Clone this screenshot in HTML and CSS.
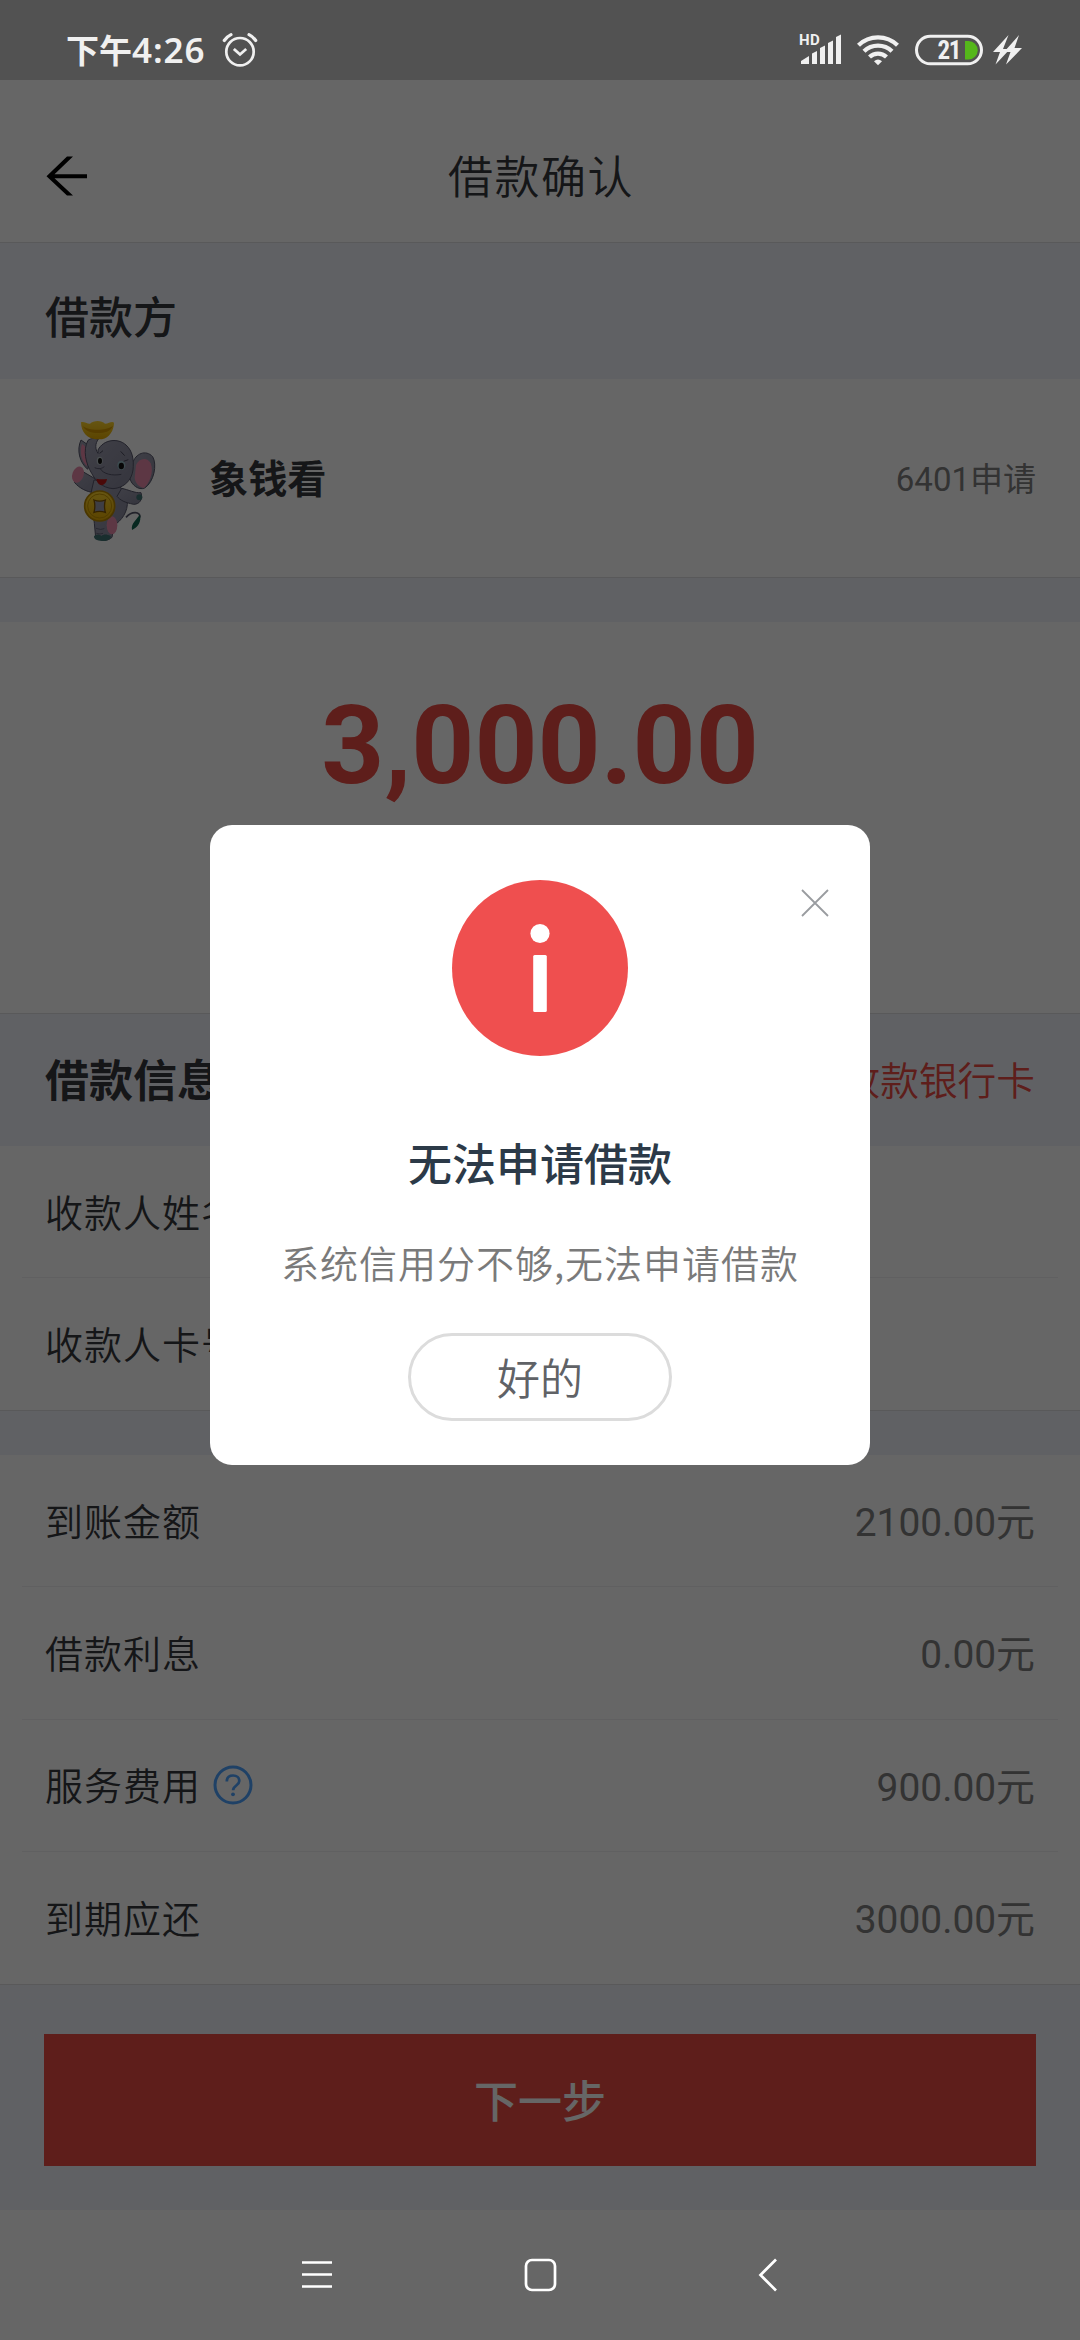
FILE: index.html
```html
<!DOCTYPE html>
<html lang="zh-CN">
<head>
<meta charset="utf-8">
<title>借款确认</title>
<link rel="stylesheet" href="styles.css">
</head>
<body>
<div class="screen">
  <div class="statusbar"></div>
  <header class="header">
    <svg class="back" width="42" height="40" viewBox="0 0 42 40"><path d="M21 0.5h6L8.500 18.200H41v4H8.500L27 39.500h-6L0.500 20.200z" fill="#000"/></svg>
    <h1 class="title">借款确认</h1>
  </header>
  <div class="section section-first"><span class="section-name">借款方</span></div>
  <div class="lender">
    <svg class="elephant" width="130" height="160" viewBox="0 0 390 480">
      <defs>
        <linearGradient id="gold" x1="0" y1="0" x2="0" y2="1"><stop offset="0" stop-color="#ffd52e"/><stop offset="1" stop-color="#e5aa00"/></linearGradient>
        <linearGradient id="skin" x1="0" y1="0" x2="1" y2="1"><stop offset="0" stop-color="#a0a0b2"/><stop offset="1" stop-color="#85859a"/></linearGradient>
      </defs>
      <g stroke="#55556a" stroke-width="3">
        <path d="M228 352c18-20 43-18 42 0" fill="none" stroke-width="5"/>
        <path d="M270 343c-8 15-28 27-24 47 14-6 26-19 25-38z" fill="#126450" stroke="none"/>
        <path d="M93 120c-14 30-4 68 20 88l20-60z" fill="url(#skin)"/>
        <path d="M96 132c-8 24-2 50 14 66l9-48z" fill="#e98bab" stroke="none"/>
        <path d="M90 210c-4 18-20 24-16 38 14 16 35 28 60 30l22-30z" fill="url(#skin)"/>
        <path d="M125 270c-10 40 6 70 8 100l4 42c20 14 38 10 49 0l6-36c22-14 43-40 40-75l-30-58-70-3z" fill="url(#skin)"/>
        <path d="M215 265c20 4 40 15 58 13 6 20-4 35-22 35-28-6-40-12-50-24z" fill="url(#skin)"/>
        <path d="M248 190c8-30 40-42 60-20 14 24 4 76-24 94-18 8-40-10-44-28z" fill="url(#skin)"/>
        <path d="M258 195c10-22 34-24 44-5 10 24-2 58-20 74-18-4-26-16-28-30z" fill="#e98bab" stroke="none"/>
        <path d="M144 150c16-32 60-37 84-15 20 18 24 44 21 75-4 30-26 54-60 56-34-3-52-24-64-46-18-30-27-70-11-99 9-6 18-8 31-3-10 12-10 30-1 42z" fill="url(#skin)"/>
      </g>
      <ellipse cx="84" cy="224" rx="17" ry="25" transform="rotate(20 84 224)" fill="#e98bab"/>
      <ellipse cx="186" cy="376" rx="16" ry="27" fill="#e98bab"/>
      <path d="M139 236c10 2 20 3 32 1-2 14-12 20-20 18-7-4-11-10-12-19z" fill="#ba1717"/>
      <path d="M150 205c10 18 38 23 64 18m-80-20c14 6 22 2 29-3" fill="none" stroke="#55556a" stroke-width="3"/>
      <ellipse cx="149" cy="182" rx="9" ry="12" fill="#b8c3c8"/><ellipse cx="214" cy="196" rx="12" ry="14" fill="#96bcc6"/>
      <ellipse cx="150" cy="183" rx="6" ry="9" fill="#111"/><ellipse cx="214" cy="198" rx="8" ry="10" fill="#111"/>
      <path d="M149 160l10-8m53 2 12 13m-3 17 14-5" stroke="#48485a" stroke-width="3" fill="none"/>
      <path d="M93 67c8-4 16 4 27 4 10-10 34-12 45 0 12 0 20-9 27-3 0 22-14 46-36 50h-18c-26-2-45-22-45-51z" fill="url(#gold)"/>
      <path d="M97 77c18 16 72 16 92 0-7 18-26 22-45 22s-38-6-47-22z" fill="#d69a00"/>
      <circle cx="149" cy="318" r="45" fill="url(#gold)" stroke="#b88800" stroke-width="5"/>
      <circle cx="149" cy="318" r="36" fill="none" stroke="#c79600" stroke-width="3"/>
      <path d="M132 300q17 7 34 0-5 18 0 37-17-6-34 0 5-19 0-37z" fill="#9c9cad" stroke="#805500" stroke-width="4"/>
      <path d="M132 408c8-6 16-6 22 0 7-6 16-6 28 0 3 8-8 15-20 15-15 0-31-2-30-15z" fill="#407373"/>
      <circle cx="268" cy="292" r="9" fill="#407373"/>
      <path d="M138 385q14 6 25 1m-24 14q12 4 20 0" fill="none" stroke="#65657a" stroke-width="3"/>
    </svg>
    <span class="lender-name">象钱看</span>
    <span class="lender-count">6401申请</span>
  </div>
  <div class="gap"></div>
  <div class="amount">3,000.00</div>
  <div class="section section-info"><span class="section-name heavy">借款信息</span><span class="change">收款银行卡</span></div>
  <div class="list">
    <div class="row"><span>收款人姓名</span></div>
    <div class="row"><span>收款人卡号</span></div>
  </div>
  <div class="gap"></div>
  <div class="list fees">
    <div class="row"><span>到账金额</span><span class="value">2100.00元</span></div>
    <div class="row"><span>借款利息</span><span class="value">0.00元</span></div>
    <div class="row"><span>服务费用</span>
      <svg class="help" width="40" height="40" viewBox="0 0 40 40" fill="none" stroke="#4ea3ff" stroke-width="3"><circle cx="20" cy="20" r="18"/><path d="M13.800 16.500c0-4 2.600-6 6.300-6s6.200 2.200 6.200 5.500c0 4.500-6.200 4.500-6.200 9.300" stroke-width="2.700"/><circle cx="20" cy="29.300" r="1.900" fill="#4ea3ff" stroke="none"/></svg>
      <span class="value">900.00元</span></div>
    <div class="row"><span>到期应还</span><span class="value">3000.00元</span></div>
  </div>
  <div class="footer"><div class="next">下一步</div></div>
</div>

<div class="overlay">
  <div class="sys-status">
    <span class="time"><span class="meridiem">下午</span>4:26</span>
    <svg class="alarm" width="36" height="36" viewBox="0 0 36 36" fill="none" stroke="#f0f0f0" stroke-width="2.700" stroke-linecap="round"><circle cx="18" cy="19.700" r="13.700"/><path d="M2.300 8.500C4 6 6 4 9 2.600M33.700 8.500C32 6 30 4 27 2.600" stroke-width="3.200"/><path d="M12.800 17.800l5.200 4.700 5.200-4.700" stroke-linecap="square"/></svg>
    <svg class="sys-icons" width="230" height="36" viewBox="795 31 230 36" fill="#f0f0f0">
      <text class="hd" x="799" y="44">HD</text>
      <path d="M801 60l8-5v8h-8zM812 52.500l5-2.500v13h-5zM820 47l5-2.500V63h-5zM828 42l5-2.500V63h-5zM836 36l5-2.500V63h-5z"/>
      <g fill="none" stroke="#f0f0f0" stroke-width="4.300"><path d="M858.500 44.300a28 28 0 0 1 39 0"/><path d="M864 50.300a20 20 0 0 1 28 0"/><path d="M869.500 56a12.500 12.500 0 0 1 17 0"/></g>
      <path d="M874 60.200q4-3.200 8 0l-4 4z"/>
      <rect x="916.500" y="35.200" width="65" height="27.600" rx="13.800" fill="none" stroke="#f0f0f0" stroke-width="3"/>
      <path d="M965 40h3.500a9.200 9.200 0 0 1 0 18.500H965z" fill="#55b71b"/>
      <text class="level" x="937.500" y="58">21</text>
      <path d="M1008.500 34l-15.500 17h7l-4.500 12.500L1010 48h-7zM1019 34l-15 17h6.500l-4.500 12.500L1022 47h-7.500z"/>
    </svg>
  </div>
  <div class="dialog">
    <svg class="close" width="28" height="28" viewBox="0 0 28 28"><path d="M1 1l26 26M27 1L1 27" stroke="#999ca0" stroke-width="1.800"/></svg>
    <svg class="info" width="176" height="176" viewBox="0 0 176 176"><circle cx="88" cy="88" r="88" fill="#ef4f4f"/><circle cx="88" cy="53.500" r="9.600" fill="#fff"/><rect x="81.200" y="75" width="13.600" height="57" rx="1.500" fill="#fff"/></svg>
    <h2 class="dialog-title">无法申请借款</h2>
    <p class="message">系统信用分不够,无法申请借款</p>
    <div class="ok">好的</div>
  </div>
  <svg class="nav" width="480" height="34" viewBox="300 2258 480 34" fill="none" stroke="#fff" stroke-width="2.700"><path d="M302 2262.500h30M302 2274.500h30M302 2286.500h30"/><rect x="526" y="2260" width="29" height="30" rx="6"/><path d="M776 2259.500L760.500 2275l15.500 15.500"/></svg>
</div>
</body>
</html>
```
FILE: styles.css
```css
* { box-sizing: border-box; margin: 0; padding: 0; }
body {
  position: relative;
  width: 1080px;
  height: 2340px;
  overflow: hidden;
  background: #fff;
  color: #36383c;
  font-family: Roboto, "Noto Sans CJK SC", sans-serif;
}
svg { display: block; flex: none; }
.screen { display: flex; flex-direction: column; height: 2340px; }
.statusbar { height: 80px; background: #cdcdcd; }
.header {
  display: flex;
  align-items: center;
  height: 163px;
  padding: 31px 46px 1px;
  border-bottom: 1px solid #dedee0;
}
.title {
  flex: 1;
  margin-right: 40px;
  padding-bottom: 3px;
  text-align: center;
  font-size: 45px;
  font-weight: 350;
  letter-spacing: 1.500px;
}
.section {
  display: flex;
  align-items: center;
  justify-content: space-between;
  height: 132px;
  padding: 0 45px;
  background: #f1f3fb;
}
.section-first { height: 136px; padding-top: 8px; }
.section-info { padding-bottom: 4px; }
.section-name { font-size: 44px; font-weight: 500; }
.heavy { font-weight: 700; }
.change { color: #eb4b44; font-size: 38.700px; font-weight: 350; }
.lender {
  display: flex;
  align-items: center;
  height: 199px;
  padding: 0 44px 0 50px;
  border-bottom: 1px solid #dedee0;
}
.elephant { margin-top: 4px; }
.lender-name { margin: -4px 0 0 29px; font-size: 39.200px; font-weight: 700; }
.lender-count { margin: -3px 0 0 auto; color: #808080; font-size: 33px; font-weight: 400; }
.gap { height: 44px; background: #f1f3fb; }
.amount {
  height: 392px;
  padding-top: 59px;
  border-bottom: 1px solid #dedee0;
  color: #eb4b44;
  text-align: center;
  font-size: 110px;
  font-weight: 700;
  line-height: 130px;
}
.list { border-bottom: 1px solid #dedee0; }
.row {
  display: flex;
  align-items: center;
  height: 132px;
  margin: 0 22px;
  padding: 0 23px 3px;
  border-bottom: 1px solid #f0f1f3;
  font-size: 38px;
  font-weight: 350;
  letter-spacing: 1px;
}
.fees .row { height: 132.250px; }
.row:last-child { border-bottom: 0; }
.value { margin-left: auto; color: #808080; letter-spacing: 0; font-size: 38.900px; font-weight: 400; }
.help { margin: 2px 0 0 12px; }
.footer { height: 225px; padding: 49px 44px 0; background: #f1f3fb; }
.next {
  height: 132px;
  background: #eb4b44;
  color: #fff;
  text-align: center;
  font-size: 44px;
  font-weight: 500;
  line-height: 138px;
}
.overlay {
  position: absolute;
  inset: 0;
  display: flex;
  flex-direction: column;
  align-items: center;
  background: rgba(0, 0, 0, .6);
}
.sys-status {
  display: flex;
  align-items: center;
  width: 100%;
  height: 80px;
  padding: 20px 55px 0 66px;
  color: #f0f0f0;
}
.time {
  width: 156px;
  font: 600 35px/58px "Noto Sans", "Noto Sans CJK SC", sans-serif;
  letter-spacing: .9px;
}
.meridiem { font-size: 33px; font-weight: 600; letter-spacing: 0; }
.sys-icons { margin-left: auto; }
.hd { font: 700 15px Roboto, sans-serif; letter-spacing: .5px; }
.level { font: 700 25px "Roboto Condensed", Roboto, sans-serif; letter-spacing: -1.500px; }
.dialog {
  position: relative;
  display: flex;
  flex-direction: column;
  align-items: center;
  width: 660px;
  height: 640px;
  margin-top: 745px;
  padding-top: 55px;
  border-radius: 22px;
  background: #fff;
}
.close { position: absolute; top: 64px; right: 41px; }
.dialog-title {
  margin-top: 78px;
  color: #2c3a48;
  font-size: 44px;
  font-weight: 500;
  line-height: 64px;
}
.message {
  margin-top: 34px;
  color: #7a7a7a;
  font-family: "Noto Sans CJK SC", sans-serif;
  font-size: 38px;
  font-weight: 350;
  line-height: 60px;
  letter-spacing: 1px;
  white-space: nowrap;
}
.ok {
  width: 264px;
  height: 88px;
  margin-top: 41px;
  border: 3px solid #dcdcdc;
  border-radius: 44px;
  color: #606266;
  text-align: center;
  font-size: 43px;
  font-weight: 350;
  line-height: 88px;
}
.nav { margin-top: 793px; }
```
